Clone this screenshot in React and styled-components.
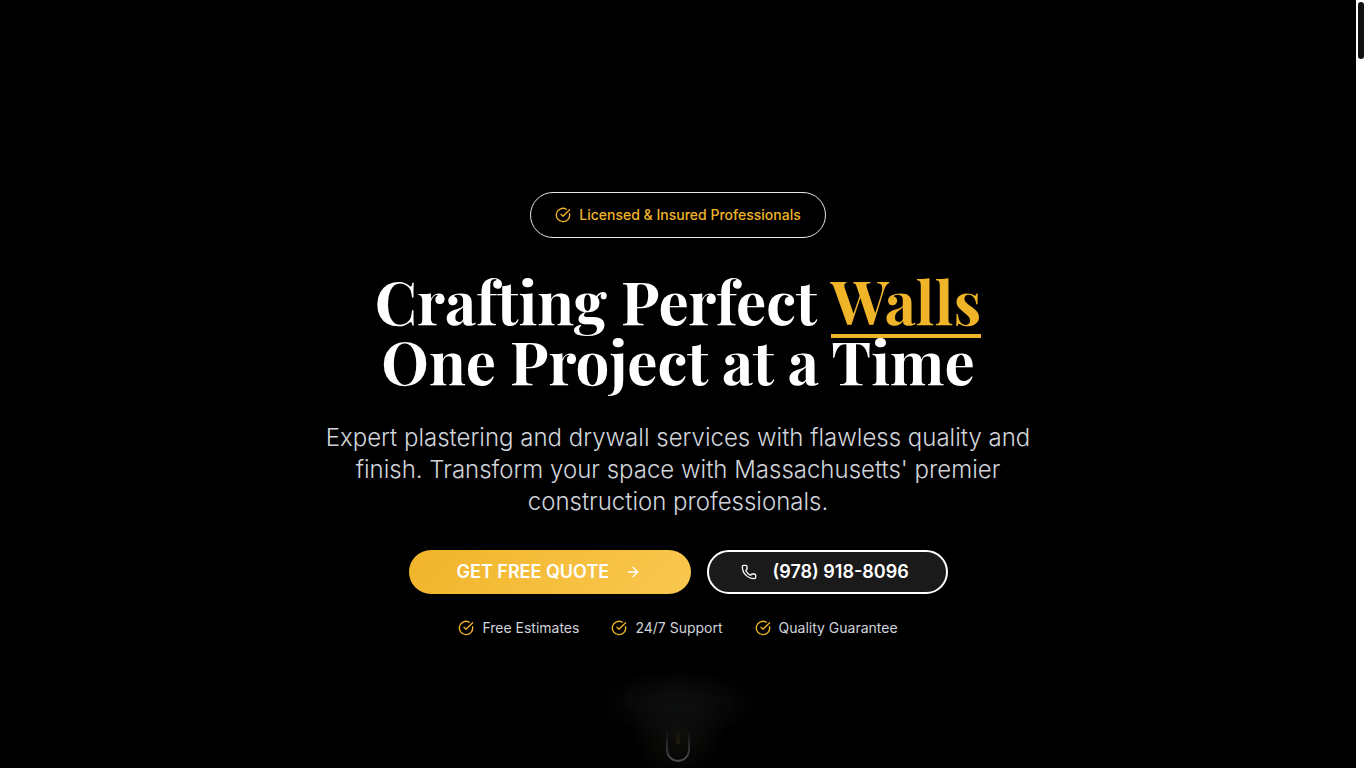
import React from "react";
import styled, { createGlobalStyle } from "styled-components";
import { ArrowRight, CircleCheckBig, Phone } from "lucide-react";

const GlobalStyle = createGlobalStyle`
  *, *::before, *::after { box-sizing: border-box; }
  html { background: #000; }
  body {
    margin: 0;
    background: #000;
    color: #fff;
    font-family: Inter, "Liberation Sans", sans-serif;
  }
`;

const Page = styled.div`
  display: flex;
  min-height: 100vh;
`;

const Hero = styled.main`
  position: relative;
  flex: 1;
  display: flex;
  flex-direction: column;
  align-items: center;
  justify-content: center;
  gap: 32px;
  padding: 62px 24px 0;
  overflow: hidden;
  text-align: center;
`;

const Badge = styled.div`
  display: flex;
  align-items: center;
  gap: 8px;
  padding: 12px 24px;
  border: 1px solid #e5e7eb;
  border-radius: 999px;
  color: #f0b429;
  font-size: 14px;
  font-weight: 500;
  line-height: 20px;
`;

const Title = styled.h1`
  margin: 0;
  font-family: "Playfair Display", "Liberation Serif", serif;
  font-size: 60px;
  font-weight: 700;
  line-height: 60px;
`;

const TitleLine = styled.span`
  display: block;
`;

const Accent = styled.span`
  position: relative;
  display: inline-block;
  color: #f0b429;

  &::after {
    content: "";
    position: absolute;
    left: 0;
    right: 0;
    bottom: -8px;
    height: 4px;
    background: #f0b429;
  }
`;

const Lead = styled.p`
  max-width: 768px;
  margin: 0;
  color: #d1d5db;
  font-size: 24px;
  font-weight: 300;
  line-height: 32px;
`;

const Footer = styled.div`
  display: flex;
  flex-direction: column;
  align-items: center;
  gap: 24px;
`;

const Actions = styled.div`
  display: flex;
  flex-wrap: wrap;
  justify-content: center;
  gap: 16px;
`;

const ActionLink = styled.a`
  display: flex;
  align-items: center;
  gap: 16px;
  min-width: ${(p) => (p.$primary ? 282 : 241)}px;
  height: 44px;
  padding: 0 ${(p) => (p.$primary ? 48 : 32)}px;
  border: ${(p) => (p.$primary ? "0" : "2px solid #fff")};
  border-radius: 999px;
  background: ${(p) => (p.$primary ? "linear-gradient(135deg, #f0b429, #fac850)" : "#1a1a1a")};
  color: #fff;
  font-size: 18px;
  font-weight: 600;
  line-height: 28px;
  text-decoration: none;
`;

const Perks = styled.ul`
  display: flex;
  flex-wrap: wrap;
  justify-content: center;
  gap: 32px;
  margin: 0;
  padding: 0;
  list-style: none;
`;

const Perk = styled.li`
  display: flex;
  align-items: center;
  gap: 8px;
  color: #d1d5db;
  font-size: 14px;
  line-height: 20px;

  svg { color: #f0b429; }
`;

const ScrollHint = styled.div`
  position: absolute;
  bottom: 0;
  left: 50%;
  display: flex;
  flex-direction: column;
  align-items: center;
  gap: 12px;
  width: 200px;
  padding: 30px 0 6px;
  transform: translateX(-50%);
  background:
    radial-gradient(ellipse 80px 36px at 50% 44px, #0c0d0d 20%, #0c0d0d00),
    radial-gradient(circle 48px at 50% 72px, #100f0c, #100f0c00);
`;

const HintText = styled.span`
  color: #0b0c0c;
  font-size: 14px;
  line-height: 20px;
`;

const Mouse = styled.div`
  display: flex;
  justify-content: center;
  width: 24px;
  height: 40px;
  padding-top: 8px;
  border: 2px solid #45474a;
  border-radius: 12px;
  mask-image: linear-gradient(transparent 20%, #000 90%);
`;

const Wheel = styled.div`
  width: 4px;
  height: 12px;
  border-radius: 2px;
  background: #3a3010;
`;

const ScrollTrack = styled.div`
  width: 10px;
  padding: 2px;
  background: #fff;
`;

const ScrollThumb = styled.div`
  height: 57px;
  border-radius: 3px;
  background: #111;
`;

const perks = ["Free Estimates", "24/7 Support", "Quality Guarantee"];

export default function App() {
  return (
    <Page>
      <GlobalStyle />
      <Hero>
        <Badge>
          <CircleCheckBig size={16} />
          Licensed &amp; Insured Professionals
        </Badge>
        <Title>
          <TitleLine>
            Crafting Perfect <Accent>Walls</Accent>
          </TitleLine>
          <TitleLine>One Project at a Time</TitleLine>
        </Title>
        <Lead>
          Expert plastering and drywall services with flawless quality and finish. Transform your
          space with Massachusetts' premier construction professionals.
        </Lead>
        <Footer>
          <Actions>
            <ActionLink href="#quote" $primary>
              GET FREE QUOTE
              <ArrowRight size={16} />
            </ActionLink>
            <ActionLink href="tel:+19789188096">
              <Phone size={16} />
              (978) 918-8096
            </ActionLink>
          </Actions>
          <Perks>
            {perks.map((perk) => (
              <Perk key={perk}>
                <CircleCheckBig size={16} />
                {perk}
              </Perk>
            ))}
          </Perks>
        </Footer>
        <ScrollHint>
          <HintText>Scroll to explore</HintText>
          <Mouse>
            <Wheel />
          </Mouse>
        </ScrollHint>
      </Hero>
      <ScrollTrack aria-hidden="true">
        <ScrollThumb />
      </ScrollTrack>
    </Page>
  );
}
